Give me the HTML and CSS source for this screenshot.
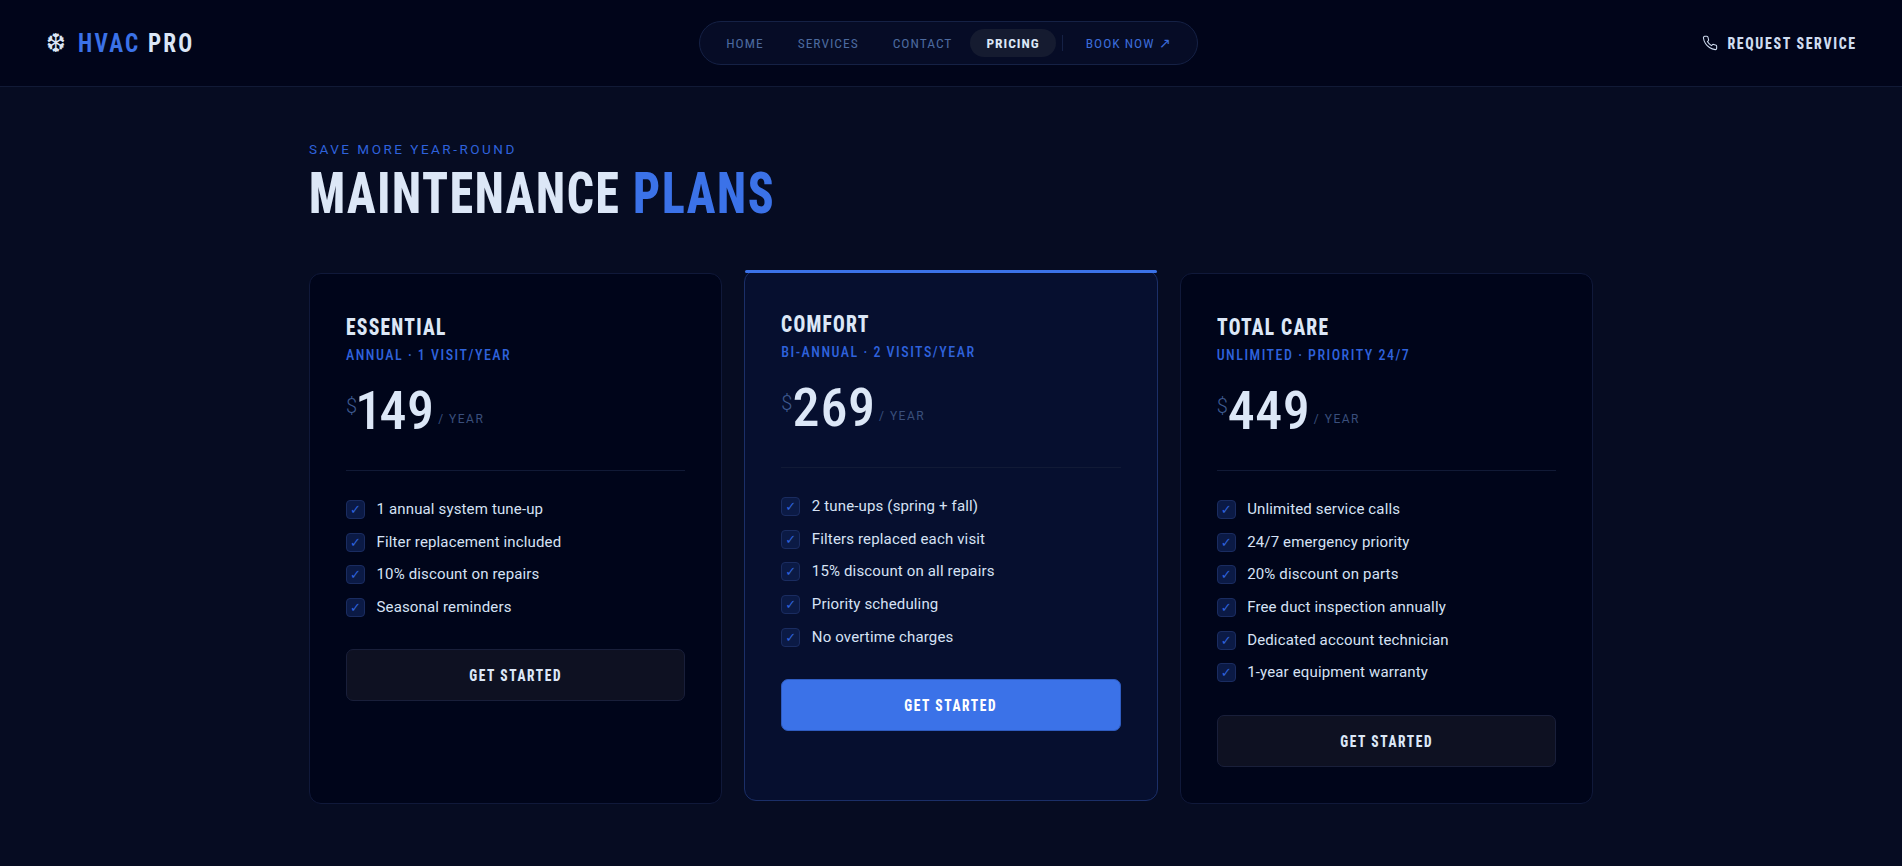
FILE: index.html
```html
<!DOCTYPE html>
<html lang="en">
<head>
  <meta charset="UTF-8">
  <title>HVAC Pro - Pricing</title>
  <link rel="stylesheet" href="styles.css">
</head>
<body>

  <header class="topbar">
    <a class="logo" href="#">
      <span class="logo-icon">❆</span>
      <span class="logo-text"><span class="accent">HVAC</span> PRO</span>
    </a>
    <nav class="nav">
      <a href="#">Home</a>
      <a href="#">Services</a>
      <a href="#">Contact</a>
      <a href="#" class="active">Pricing</a>
      <span class="nav-divider"></span>
      <a href="#" class="nav-book">Book Now ↗</a>
    </nav>
    <a class="request" href="#">
      <svg class="phone" viewBox="0 0 24 24" fill="none" stroke="currentColor" stroke-width="1.6" stroke-linecap="round" stroke-linejoin="round">
        <path d="M22 16.92v3a2 2 0 0 1-2.18 2 19.79 19.79 0 0 1-8.63-3.07 19.5 19.5 0 0 1-6-6 19.79 19.79 0 0 1-3.07-8.67A2 2 0 0 1 4.11 2h3a2 2 0 0 1 2 1.72 12.84 12.84 0 0 0 .7 2.81 2 2 0 0 1-.45 2.11L8.09 9.91a16 16 0 0 0 6 6l1.27-1.27a2 2 0 0 1 2.11-.45 12.84 12.84 0 0 0 2.81.7A2 2 0 0 1 22 16.92z"/>
      </svg>
      <span class="request-text">Request Service</span>
    </a>
  </header>

  <main class="pricing">
    <div class="eyebrow">Save More Year-Round</div>
    <h1>Maintenance <span class="accent">Plans</span></h1>

    <div class="plans">
      <section class="plan">
        <h2>Essential</h2>
        <div class="plan-sub">Annual · 1 Visit/Year</div>
        <div class="price"><span class="currency">$</span><span class="amount">149</span><span class="period">/ Year</span></div>
        <ul class="features">
          <li><span class="check">✓</span>1 annual system tune-up</li>
          <li><span class="check">✓</span>Filter replacement included</li>
          <li><span class="check">✓</span>10% discount on repairs</li>
          <li><span class="check">✓</span>Seasonal reminders</li>
        </ul>
        <button class="plan-btn"><span>Get Started</span></button>
      </section>

      <section class="plan featured">
        <h2>Comfort</h2>
        <div class="plan-sub">Bi-Annual · 2 Visits/Year</div>
        <div class="price"><span class="currency">$</span><span class="amount">269</span><span class="period">/ Year</span></div>
        <ul class="features">
          <li><span class="check">✓</span>2 tune-ups (spring + fall)</li>
          <li><span class="check">✓</span>Filters replaced each visit</li>
          <li><span class="check">✓</span>15% discount on all repairs</li>
          <li><span class="check">✓</span>Priority scheduling</li>
          <li><span class="check">✓</span>No overtime charges</li>
        </ul>
        <button class="plan-btn"><span>Get Started</span></button>
      </section>

      <section class="plan">
        <h2>Total Care</h2>
        <div class="plan-sub">Unlimited · Priority 24/7</div>
        <div class="price"><span class="currency">$</span><span class="amount">449</span><span class="period">/ Year</span></div>
        <ul class="features">
          <li><span class="check">✓</span>Unlimited service calls</li>
          <li><span class="check">✓</span>24/7 emergency priority</li>
          <li><span class="check">✓</span>20% discount on parts</li>
          <li><span class="check">✓</span>Free duct inspection annually</li>
          <li><span class="check">✓</span>Dedicated account technician</li>
          <li><span class="check">✓</span>1-year equipment warranty</li>
        </ul>
        <button class="plan-btn"><span>Get Started</span></button>
      </section>
    </div>
  </main>

</body>
</html>
```

FILE: styles.css
```css
* {
  box-sizing: border-box;
}
body {
  margin: 0;
  min-height: 866px;
  background: #060c22;
  color: #dce7f7;
  font-family: Roboto, "Noto Sans", sans-serif;
}
a {
  color: inherit;
  text-decoration: none;
}
.accent {
  color: #3b72e8;
}

.topbar {
  display: flex;
  justify-content: space-between;
  align-items: center;
  height: 87px;
  padding: 0 45px 0 46px;
  background: #01051a;
  border-bottom: 1px solid #111a36;
}
.logo {
  display: flex;
  align-items: center;
  gap: 12px;
  font-stretch: 75%;
  font-weight: 700;
  font-size: 26px;
  letter-spacing: 2.5px;
}
.logo-icon {
  font-family: "DejaVu Sans", sans-serif;
  font-size: 26px;
  font-weight: 400;
  letter-spacing: 0;
}
.logo-text {
  margin-right: -14px;
  transform: scaleX(0.89);
  transform-origin: left center;
}
.nav {
  display: flex;
  align-items: center;
  gap: 2px;
  height: 44px;
  padding: 0 9px 0 10px;
  background: #060c26;
  border: 1px solid #152145;
  border-radius: 22px;
  font-size: 13.5px;
  font-stretch: 75%;
  letter-spacing: 1px;
  text-transform: uppercase;
  color: #4c6a9f;
}
.nav a {
  padding: 0 16px;
  line-height: 28px;
  border-radius: 14px;
}
.nav a.active {
  background: #151b30;
  color: #dce7f7;
  font-weight: 700;
}
.nav-divider {
  width: 1px;
  height: 16px;
  margin: 0 5px 0 4px;
  background: #152145;
}
.nav a.nav-book {
  color: #3b6bd8;
}
.request {
  display: flex;
  align-items: center;
  font-stretch: 75%;
  font-weight: 800;
  font-size: 17px;
  letter-spacing: 2px;
  text-transform: uppercase;
  color: #cfdcf0;
}
.phone {
  width: 16px;
  height: 16px;
  margin-right: -19px;
}
.request-text {
  transform: scaleX(0.82);
  transform-origin: right center;
}

.pricing {
  width: 1284px;
  margin: 0 auto;
  padding: 54px 0 64px;
}
.eyebrow {
  font-size: 13.5px;
  line-height: 16px;
  letter-spacing: 2.5px;
  text-transform: uppercase;
  color: #2f62dc;
}
h1 {
  margin: 12px 0 56px;
  font-stretch: 75%;
  font-weight: 800;
  font-size: 58px;
  line-height: 48px;
  letter-spacing: 2px;
  text-transform: uppercase;
  transform: scaleX(0.82);
  transform-origin: left center;
}

.plans {
  display: grid;
  grid-template-columns: repeat(3, 1fr);
  gap: 22px;
}
.plan {
  position: relative;
  padding: 36px;
  background: #00051a;
  border: 1px solid #10193a;
  border-radius: 12px;
}
.plan.featured {
  transform: translateY(-3px);
  background: #060f2f;
  border-color: #1b2f68;
}
.plan.featured::before {
  content: "";
  position: absolute;
  top: -1px;
  left: 0;
  right: 0;
  height: 3px;
  background: #3b72e8;
  border-radius: 2px;
}
h2 {
  margin: 2px 0 0;
  font-stretch: 75%;
  font-weight: 800;
  font-size: 23.5px;
  line-height: 30px;
  letter-spacing: 1.5px;
  text-transform: uppercase;
  transform: scaleX(0.83);
  transform-origin: left center;
}
.plan-sub {
  margin-top: 5px;
  font-size: 14px;
  font-stretch: 75%;
  font-weight: 500;
  line-height: 16px;
  letter-spacing: 1.5px;
  text-transform: uppercase;
  color: #2f62dc;
}
.price {
  display: flex;
  align-items: flex-start;
  height: 88px;
  margin-top: 20px;
  border-bottom: 1px solid #111a36;
}
.currency {
  margin-top: 11px;
  font-size: 20px;
  line-height: 24px;
  font-weight: 300;
  color: #3e5a90;
}
.amount {
  font-size: 54px;
  font-stretch: 75%;
  font-weight: 500;
  font-variant-numeric: proportional-nums;
  line-height: 56px;
  letter-spacing: 0.5px;
}
.period {
  margin: 28px 0 0 3px;
  font-size: 12px;
  line-height: 16px;
  letter-spacing: 1.5px;
  text-transform: uppercase;
  color: #3a4f7c;
}
.features {
  display: flex;
  flex-direction: column;
  gap: 13.7px;
  margin: 29px 0 32.4px;
  padding: 0;
  list-style: none;
}
.features li {
  display: flex;
  align-items: center;
  gap: 11.5px;
  font-size: 15px;
  line-height: 19px;
  letter-spacing: 0.15px;
  color: #d6e2f5;
}
.check {
  display: flex;
  justify-content: center;
  align-items: center;
  width: 19px;
  height: 19px;
  background: #0b1a45;
  border: 1px solid #1a2c60;
  border-radius: 4px;
  font-family: "DejaVu Sans", sans-serif;
  font-size: 13px;
  color: #2f62dc;
}
.plan-btn {
  display: block;
  width: 100%;
  height: 52px;
  background: #0e1122;
  border: 1px solid #191f3a;
  border-radius: 7px;
  font-family: Roboto, sans-serif;
  font-stretch: 75%;
  font-weight: 800;
  font-size: 17px;
  letter-spacing: 2px;
  text-transform: uppercase;
  color: #dce7f7;
  cursor: pointer;
}
.plan-btn span {
  display: inline-block;
  transform: scaleX(0.79);
}
.featured .plan-btn {
  background: #3b72e8;
  border-color: #2f5cc0;
  color: #fff;
}
```
